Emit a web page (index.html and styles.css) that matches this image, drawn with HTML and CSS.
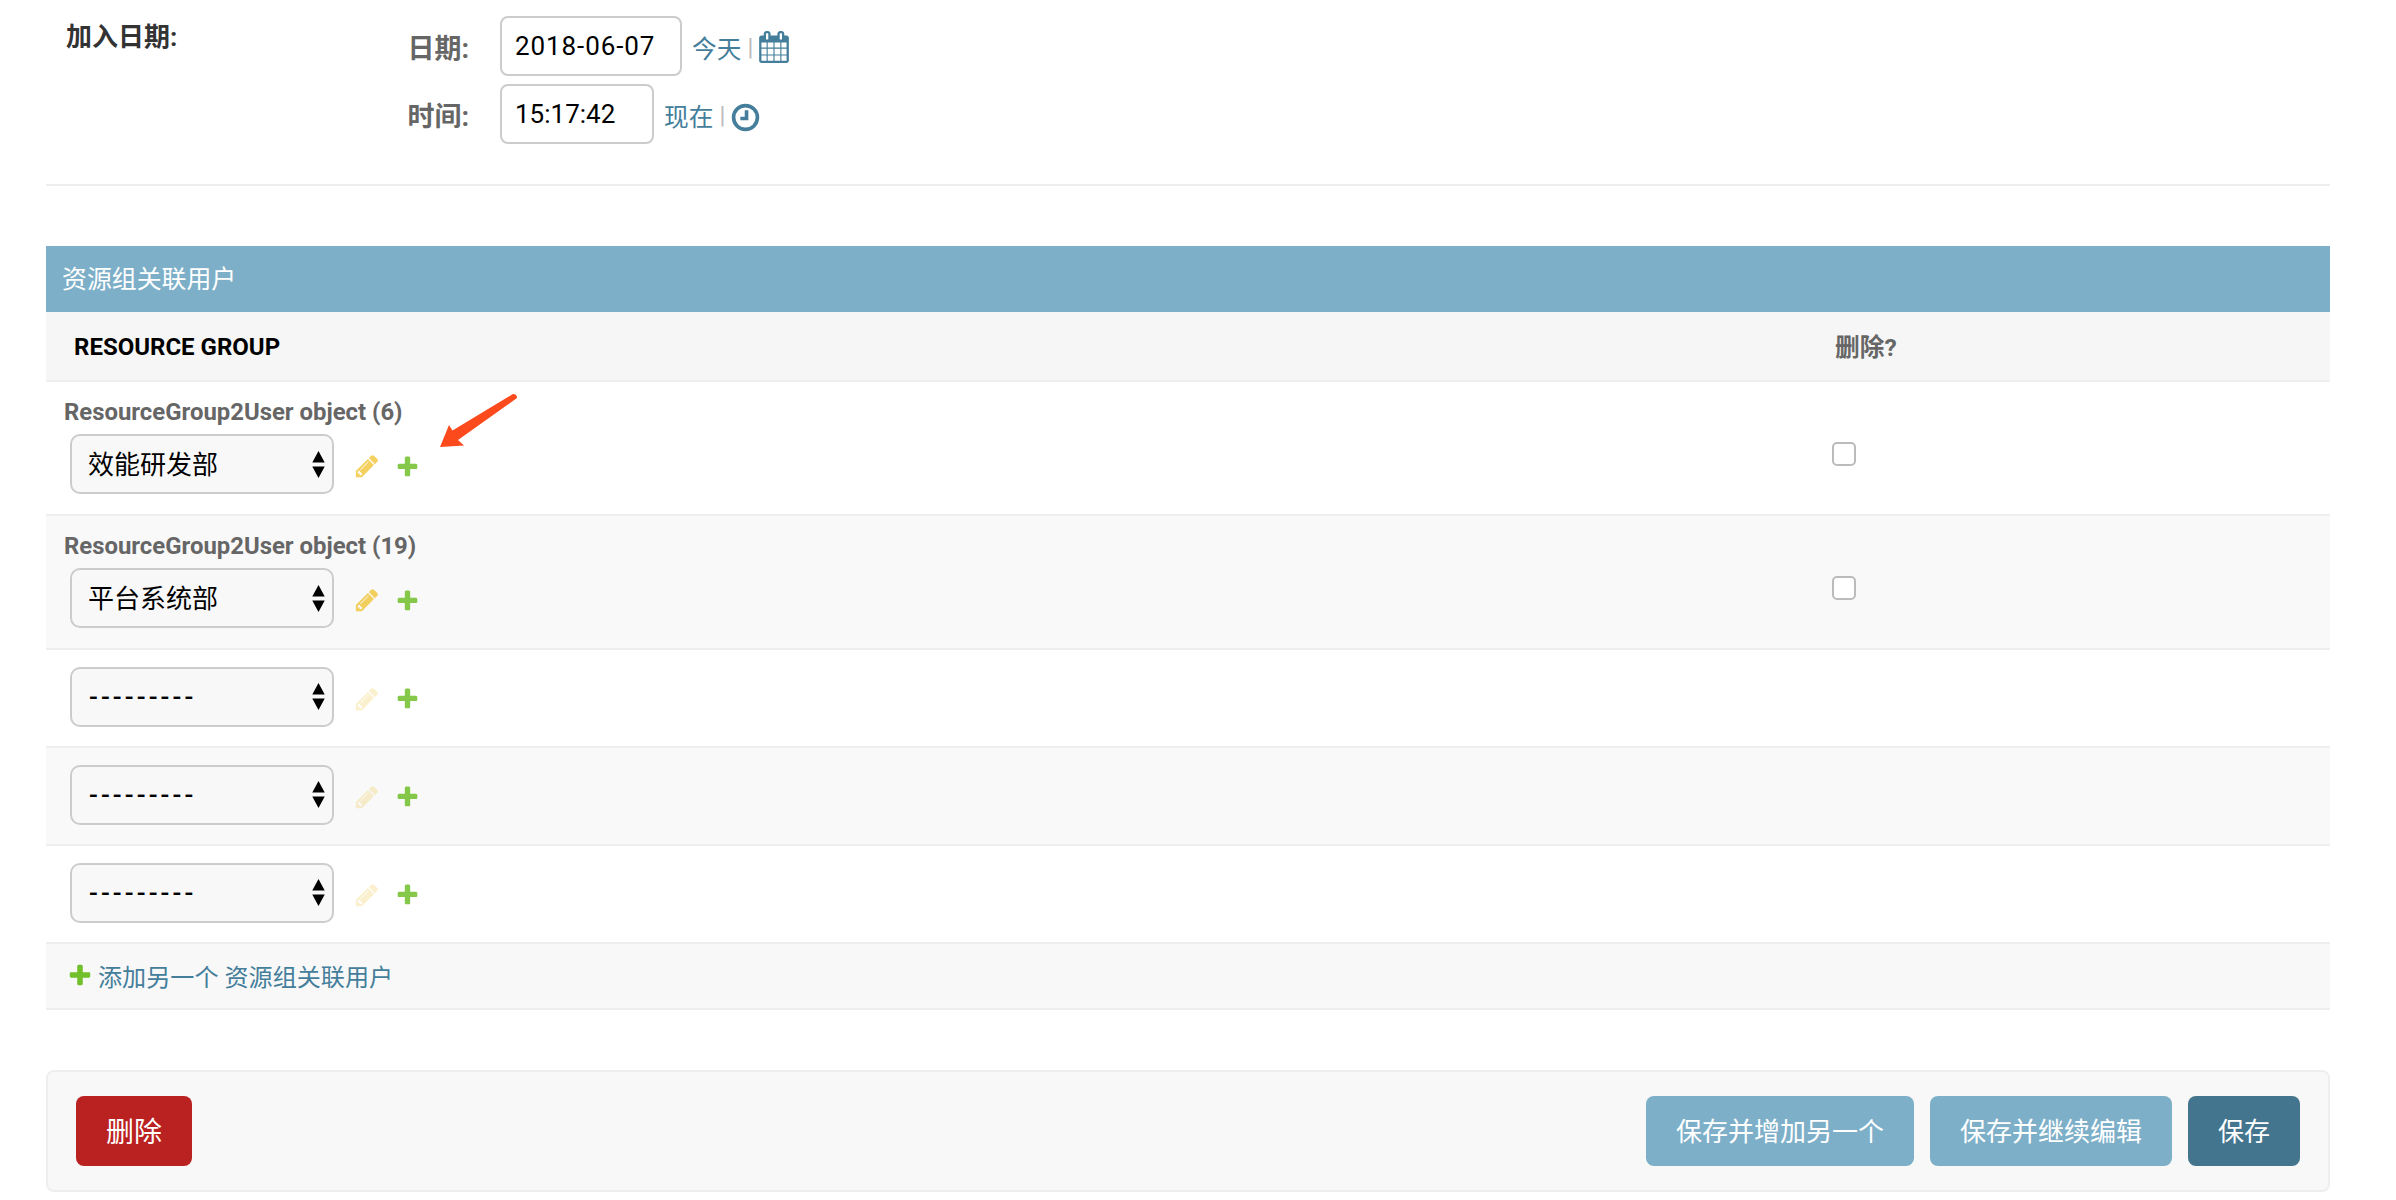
FILE: index.html
```html
<!DOCTYPE html>
<html lang="zh">
<head>
<meta charset="utf-8">
<title>资源组关联用户</title>
<link rel="stylesheet" href="styles.css">
</head>
<body>
<main class="page">
  <section class="date-row">
    <div class="date-label">加入日期:</div>
    <div class="date-fields">
      <div class="date-line">
        <span class="sub-label">日期:</span>
        <input class="text-input input-date" type="text" value="2018-06-07">
        <a class="link shortcut">今天</a><span class="sep">|</span>
        <svg class="icon-cal" viewBox="0 0 1792 1792"><path d="M192 1664h288v-288h-288v288zm352 0h320v-288h-320v288zm-352-352h288v-320h-288v320zm352 0h320v-320h-320v320zm-352-384h288v-288h-288v288zm736 736h320v-288h-320v288zm-384-736h320v-288h-320v288zm768 736h288v-288h-288v288zm-384-352h320v-320h-320v320zm-352-864v-288q0-13-9.500-22.500t-22.500-9.500h-64q-13 0-22.500 9.500t-9.500 22.500v288q0 13 9.500 22.500t22.500 9.500h64q13 0 22.500-9.500t9.500-22.500zm736 864h288v-320h-288v320zm-384-384h320v-288h-320v288zm384 0h288v-288h-288v288zm32-480v-288q0-13-9.500-22.500t-22.500-9.500h-64q-13 0-22.500 9.500t-9.500 22.500v288q0 13 9.500 22.500t22.500 9.500h64q13 0 22.500-9.500t9.500-22.500zm384-64v1280q0 52-38 90t-90 38h-1408q-52 0-90-38t-38-90v-1280q0-52 38-90t90-38h128v-96q0-66 47-113t113-47h64q66 0 113 47t47 113v96h384v-96q0-66 47-113t113-47h64q66 0 113 47t47 113v96h128q52 0 90 38t38 90z"/></svg>
      </div>
      <div class="date-line">
        <span class="sub-label">时间:</span>
        <input class="text-input input-time" type="text" value="15:17:42">
        <a class="link shortcut">现在</a><span class="sep">|</span>
        <svg class="icon-clock" viewBox="0 0 28 28"><circle cx="14" cy="14" r="11.500"/><path d="M15 7v8H9"/></svg>
      </div>
    </div>
  </section>

  <section class="module">
    <h2 class="module-title">资源组关联用户</h2>
    <div class="table-head">
      <div class="col-main head-main">RESOURCE GROUP</div>
      <div class="col-del head-del">删除?</div>
    </div>

    <div class="row row-tall row-annotated">
      <div class="col-main">
        <div class="obj-label">ResourceGroup2User object (6)</div>
        <div class="field">
          <div class="select"><span class="select-text">效能研发部</span><svg class="arrows" viewBox="0 0 12 26"><path d="M6 0l6 11H0zM6 26L0 15h12z"/></svg></div>
          <svg class="icon-edit" viewBox="0 0 1792 1792"><path d="M491 1536l91-91-235-235-91 91v107h128v128h107zm523-928q0-22-22-22-10 0-17 7l-542 542q-7 7-7 17 0 22 22 22 10 0 17-7l542-542q7-7 7-17zm-54-192l416 416-832 832h-416v-416zm683 96q0 53-37 90l-166 166-416-416 166-165q36-38 90-38 53 0 91 38l235 234q37 39 37 91z"/></svg>
          <svg class="icon-add" viewBox="0 0 1792 1792"><path d="M1600 796v192q0 40-28 68t-68 28h-416v416q0 40-28 68t-68 28h-192q-40 0-68-28t-28-68v-416h-416q-40 0-68-28t-28-68v-192q0-40 28-68t68-28h416v-416q0-40 28-68t68-28h192q40 0 68 28t28 68v416h416q40 0 68 28t28 68z"/></svg>
        </div>
      </div>
      <div class="col-del"><input class="check" type="checkbox"></div>
      <svg class="arrow-mark" viewBox="0 0 90 60"><path d="M81 2Q85 2 85 6L26 48 32 53.500 8 55 17 33 20.500 38.500z"/></svg>
    </div>

    <div class="row row-tall row-alt">
      <div class="col-main">
        <div class="obj-label">ResourceGroup2User object (19)</div>
        <div class="field">
          <div class="select"><span class="select-text">平台系统部</span><svg class="arrows" viewBox="0 0 12 26"><path d="M6 0l6 11H0zM6 26L0 15h12z"/></svg></div>
          <svg class="icon-edit" viewBox="0 0 1792 1792"><path d="M491 1536l91-91-235-235-91 91v107h128v128h107zm523-928q0-22-22-22-10 0-17 7l-542 542q-7 7-7 17 0 22 22 22 10 0 17-7l542-542q7-7 7-17zm-54-192l416 416-832 832h-416v-416zm683 96q0 53-37 90l-166 166-416-416 166-165q36-38 90-38 53 0 91 38l235 234q37 39 37 91z"/></svg>
          <svg class="icon-add" viewBox="0 0 1792 1792"><path d="M1600 796v192q0 40-28 68t-68 28h-416v416q0 40-28 68t-68 28h-192q-40 0-68-28t-28-68v-416h-416q-40 0-68-28t-28-68v-192q0-40 28-68t68-28h416v-416q0-40 28-68t68-28h192q40 0 68 28t28 68v416h416q40 0 68 28t28 68z"/></svg>
        </div>
      </div>
      <div class="col-del"><input class="check" type="checkbox"></div>
    </div>

    <div class="row row-short">
      <div class="col-main field">
        <div class="select"><span class="dashes">---------</span><svg class="arrows" viewBox="0 0 12 26"><path d="M6 0l6 11H0zM6 26L0 15h12z"/></svg></div>
        <svg class="icon-edit is-off" viewBox="0 0 1792 1792"><path d="M491 1536l91-91-235-235-91 91v107h128v128h107zm523-928q0-22-22-22-10 0-17 7l-542 542q-7 7-7 17 0 22 22 22 10 0 17-7l542-542q7-7 7-17zm-54-192l416 416-832 832h-416v-416zm683 96q0 53-37 90l-166 166-416-416 166-165q36-38 90-38 53 0 91 38l235 234q37 39 37 91z"/></svg>
        <svg class="icon-add" viewBox="0 0 1792 1792"><path d="M1600 796v192q0 40-28 68t-68 28h-416v416q0 40-28 68t-68 28h-192q-40 0-68-28t-28-68v-416h-416q-40 0-68-28t-28-68v-192q0-40 28-68t68-28h416v-416q0-40 28-68t68-28h192q40 0 68 28t28 68v416h416q40 0 68 28t28 68z"/></svg>
      </div>
    </div>

    <div class="row row-short row-alt">
      <div class="col-main field">
        <div class="select"><span class="dashes">---------</span><svg class="arrows" viewBox="0 0 12 26"><path d="M6 0l6 11H0zM6 26L0 15h12z"/></svg></div>
        <svg class="icon-edit is-off" viewBox="0 0 1792 1792"><path d="M491 1536l91-91-235-235-91 91v107h128v128h107zm523-928q0-22-22-22-10 0-17 7l-542 542q-7 7-7 17 0 22 22 22 10 0 17-7l542-542q7-7 7-17zm-54-192l416 416-832 832h-416v-416zm683 96q0 53-37 90l-166 166-416-416 166-165q36-38 90-38 53 0 91 38l235 234q37 39 37 91z"/></svg>
        <svg class="icon-add" viewBox="0 0 1792 1792"><path d="M1600 796v192q0 40-28 68t-68 28h-416v416q0 40-28 68t-68 28h-192q-40 0-68-28t-28-68v-416h-416q-40 0-68-28t-28-68v-192q0-40 28-68t68-28h416v-416q0-40 28-68t68-28h192q40 0 68 28t28 68v416h416q40 0 68 28t28 68z"/></svg>
      </div>
    </div>

    <div class="row row-short">
      <div class="col-main field">
        <div class="select"><span class="dashes">---------</span><svg class="arrows" viewBox="0 0 12 26"><path d="M6 0l6 11H0zM6 26L0 15h12z"/></svg></div>
        <svg class="icon-edit is-off" viewBox="0 0 1792 1792"><path d="M491 1536l91-91-235-235-91 91v107h128v128h107zm523-928q0-22-22-22-10 0-17 7l-542 542q-7 7-7 17 0 22 22 22 10 0 17-7l542-542q7-7 7-17zm-54-192l416 416-832 832h-416v-416zm683 96q0 53-37 90l-166 166-416-416 166-165q36-38 90-38 53 0 91 38l235 234q37 39 37 91z"/></svg>
        <svg class="icon-add" viewBox="0 0 1792 1792"><path d="M1600 796v192q0 40-28 68t-68 28h-416v416q0 40-28 68t-68 28h-192q-40 0-68-28t-28-68v-416h-416q-40 0-68-28t-28-68v-192q0-40 28-68t68-28h416v-416q0-40 28-68t68-28h192q40 0 68 28t28 68v416h416q40 0 68 28t28 68z"/></svg>
      </div>
    </div>

    <div class="add-row">
      <svg class="icon-add-strong" viewBox="0 0 1792 1792"><path d="M1600 796v192q0 40-28 68t-68 28h-416v416q0 40-28 68t-68 28h-192q-40 0-68-28t-28-68v-416h-416q-40 0-68-28t-28-68v-192q0-40 28-68t68-28h416v-416q0-40 28-68t68-28h192q40 0 68 28t28 68v416h416q40 0 68 28t28 68z"/></svg>
      <a class="link add-text">添加另一个 资源组关联用户</a>
    </div>
  </section>

  <footer class="submit-row">
    <a class="btn btn-delete">删除</a>
    <div class="submit-right">
      <button class="btn btn-light btn-addanother" type="button">保存并增加另一个</button>
      <button class="btn btn-light btn-continue" type="button">保存并继续编辑</button>
      <button class="btn btn-dark" type="button">保存</button>
    </div>
  </footer>
</main>
</body>
</html>
```

FILE: styles.css
```css
* { box-sizing: border-box; }
html, body { margin: 0; padding: 0; background: #fff; }
body {
  font-family: Roboto, "Noto Sans CJK SC", sans-serif;
  font-size: 24.7px;
  color: #333;
  height: 1200px;
  overflow: hidden;
}
.page { padding: 0 66px 0 46px; }

.date-row {
  display: flex;
  height: 186px;
  padding-top: 16px;
  border-bottom: 2px solid #eee;
}
.date-label {
  width: 326px;
  padding: 6px 0 0 20px;
  font-size: 26px;
  font-weight: 700;
  line-height: 30px;
  color: #333;
}
.date-fields { display: flex; flex-direction: column; gap: 8px; }
.date-line { display: flex; align-items: center; height: 60px; }
.sub-label {
  width: 128px;
  padding: 1px 31px 0 0;
  text-align: right;
  font-size: 27px;
  font-weight: 700;
  color: #666;
  white-space: nowrap;
}
.text-input {
  height: 60px;
  padding: 0 12px 0 13px;
  border: 2px solid #ccc;
  border-radius: 8px;
  background: #fff;
  font: 400 26px Roboto, sans-serif;
  color: #000;
  outline: none;
}
.input-date { width: 182px; letter-spacing: .9px; }
.input-time { width: 154px; }
.link { color: #447e9b; text-decoration: none; }
.shortcut { margin: 2px 0 0 10px; }
.sep { margin: 2px 5px 0 6px; color: #bbb; font-size: 24px; }
.icon-cal { width: 32px; height: 32px; margin-top: 1px; fill: #447e9b; }
.icon-clock {
  width: 29px;
  height: 29px;
  margin: 6px 0 0 1px;
  fill: none;
  stroke: #447e9b;
  stroke-width: 3.500;
}

.module { margin-top: 60px; }
.module-title {
  margin: 0;
  height: 66px;
  padding-left: 16px;
  background: #7dafc8;
  color: #fff;
  font-size: 24.900px;
  font-weight: 400;
  line-height: 68px;
}
.table-head {
  display: flex;
  align-items: center;
  height: 70px;
  background: #f6f6f6;
  border-bottom: 2px solid #eee;
  font-weight: 700;
}
.col-main { width: 1786px; }
.head-main { padding: 1px 0 0 28px; color: #000; font-size: 24px; }
.head-del { padding: 0 0 2px 3px; color: #666; }

.row { display: flex; border-bottom: 2px solid #eee; background: #fff; }
.row-alt { background: #f9f9f9; }
.row-annotated { position: relative; }
.row-tall { height: 134px; align-items: flex-start; }
.row-short { height: 98px; align-items: center; padding-bottom: 3px; }
.obj-label {
  margin: 15px 0 0 18px;
  font-size: 23.900px;
  font-weight: 700;
  color: #666;
  line-height: 30px;
  white-space: nowrap;
}
.field { display: flex; align-items: center; }
.row-tall .field { margin-top: 7px; }
.select {
  display: flex;
  align-items: center;
  justify-content: space-between;
  width: 264px;
  height: 60px;
  margin-left: 24px;
  padding: 0 7px 0 16px;
  border: 2px solid #ccc;
  border-radius: 10px;
  background: #f8f8f8;
  font-size: 26px;
  color: #000;
}
.select-text { margin-bottom: 3px; }
.dashes { letter-spacing: 3.100px; margin-left: 1px; font-weight: 500; }
.arrows { width: 13px; height: 27px; fill: #000; }
.icon-edit { width: 26px; height: 26px; margin: 4px 0 0 20px; fill: #efb80b; opacity: .65; }
.icon-edit.is-off { opacity: .2; }
.icon-add { width: 25px; height: 25px; margin: 4px 0 0 15px; fill: #70bf2b; opacity: .85; }
.check {
  appearance: none;
  display: block;
  width: 24px;
  height: 24px;
  margin: 60px 0 0 0;
  border: 2px solid #bbb;
  border-radius: 5px;
  background: #fff;
}
.arrow-mark {
  position: absolute;
  left: 386px;
  top: 10px;
  width: 90px;
  height: 60px;
  fill: #fc4a1d;
}

.add-row {
  display: flex;
  align-items: center;
  height: 66px;
  padding-left: 21px;
  font-size: 24.100px;
  background: #f8f8f8;
  border-bottom: 2px solid #eee;
}
.add-text { margin-bottom: 2px; }
.icon-add-strong { width: 26px; height: 26px; margin: 0 5px 2px 0; fill: #70bf2b; }

.submit-row {
  display: flex;
  align-items: center;
  justify-content: space-between;
  height: 122px;
  margin-top: 60px;
  padding: 0 28px 0 28px;
  background: #f8f8f8;
  border: 2px solid #eee;
  border-radius: 8px;
}
.submit-right { display: flex; gap: 16px; }
.btn {
  display: flex;
  align-items: center;
  justify-content: center;
  height: 70px;
  padding: 0 0 3px;
  border: 0;
  border-radius: 8px;
  font: 400 26px Roboto, "Noto Sans CJK SC", sans-serif;
  color: #fff;
}
.btn-delete { width: 116px; background: #ba2121; font-size: 28px; }
.btn-light { background: #7dafc8; }
.btn-addanother { width: 268px; }
.btn-continue { width: 242px; }
.btn-dark { width: 112px; background: #44758f; }
```
